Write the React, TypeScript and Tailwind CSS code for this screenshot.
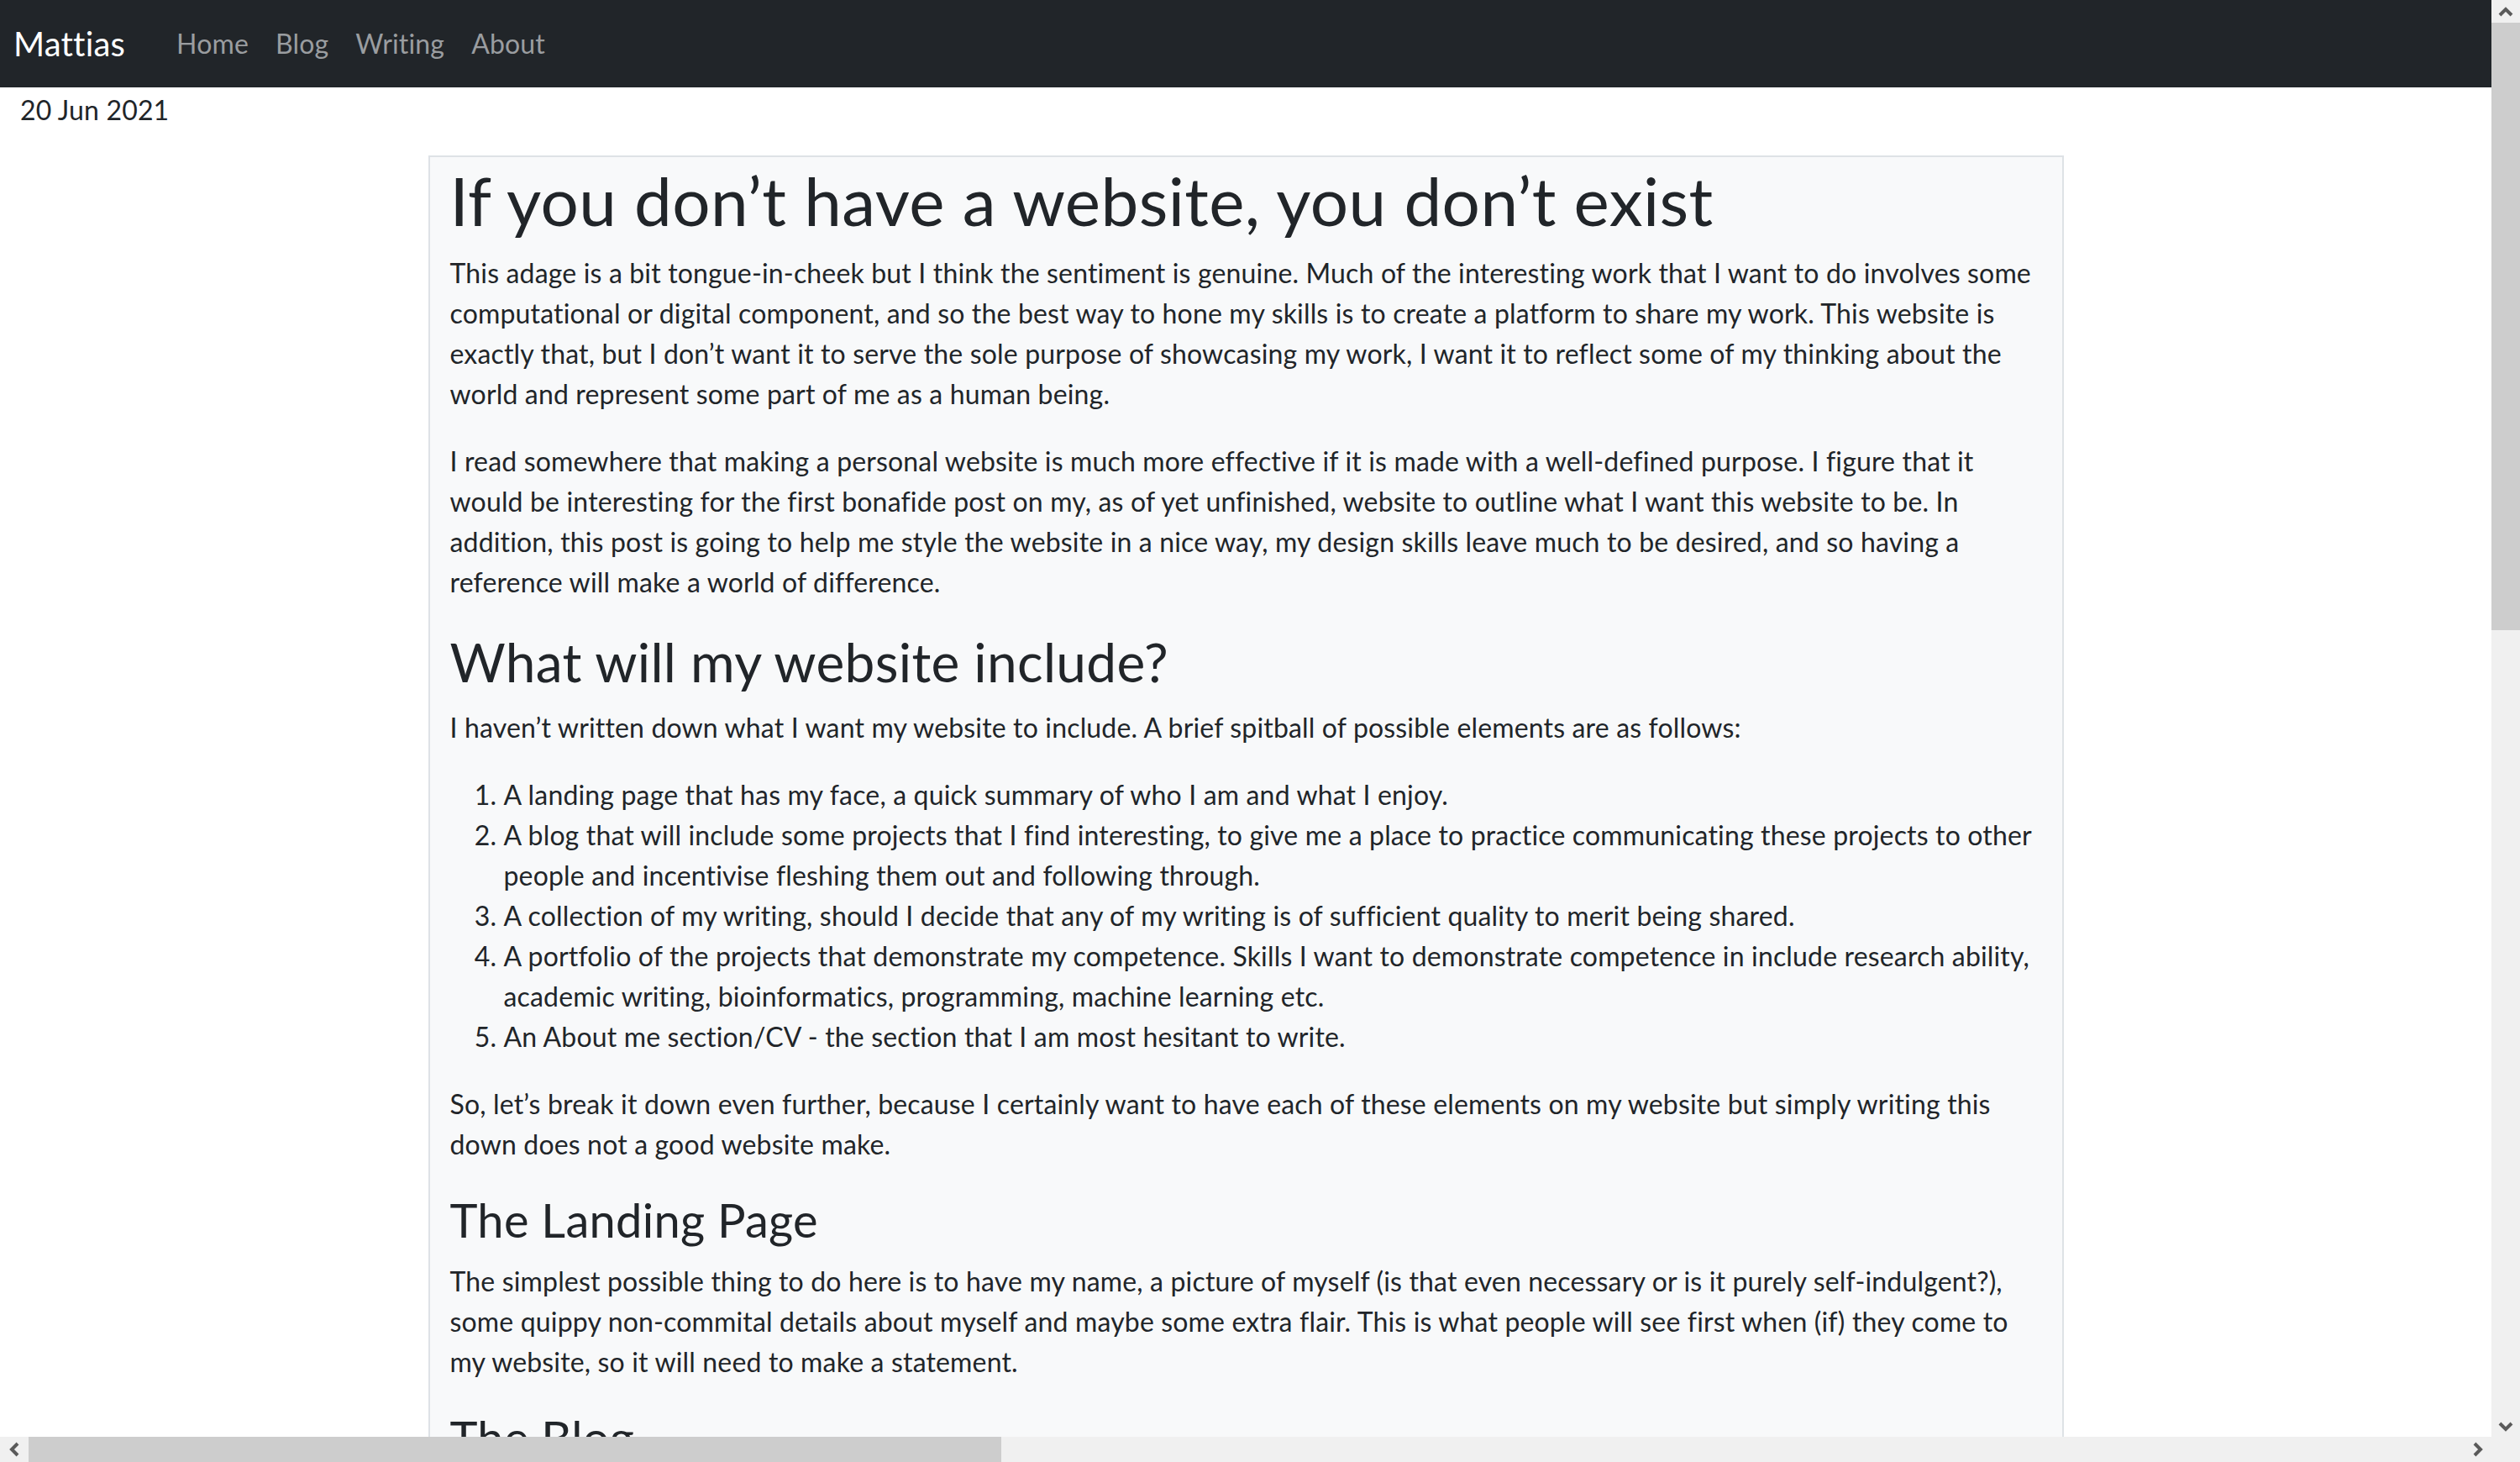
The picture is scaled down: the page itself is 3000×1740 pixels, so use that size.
import React from "react";

const navLinks = ["Home", "Blog", "Writing", "About"];

const listItems = [
  "A landing page that has my face, a quick summary of who I am and what I enjoy.",
  "A blog that will include some projects that I find interesting, to give me a place to practice communicating these projects to other people and incentivise fleshing them out and following through.",
  "A collection of my writing, should I decide that any of my writing is of sufficient quality to merit being shared.",
  "A portfolio of the projects that demonstrate my competence. Skills I want to demonstrate competence in include research ability, academic writing, bioinformatics, programming, machine learning etc.",
  "An About me section/CV - the section that I am most hesitant to write.",
];

function Chevron({ dir }: { dir: "up" | "down" | "left" | "right" }) {
  const paths = {
    up: "M2 12 L9 5 L16 12",
    down: "M2 5 L9 12 L16 5",
    left: "M12 2 L5 9 L12 16",
    right: "M5 2 L12 9 L5 16",
  };
  const box = dir === "up" || dir === "down" ? "0 0 18 16" : "0 0 16 18";
  const size = dir === "up" || dir === "down" ? "w-[18px] h-[16px]" : "w-[16px] h-[18px]";
  return (
    <svg className={size} viewBox={box} fill="none">
      <path d={paths[dir]} stroke="#5a5a5a" strokeWidth={4} strokeLinecap="butt" strokeLinejoin="miter" />
    </svg>
  );
}

function Navbar() {
  return (
    <nav className="h-[104px] shrink-0 bg-[#212529] flex items-center px-[16px]">
      <a className="text-[40px] leading-[60px] tracking-[0.005em] text-white mr-[61px]">Mattias</a>
      <ul className="flex items-center gap-[32px]">
        {navLinks.map((l) => (
          <li key={l} className="text-[32px] leading-[48px] tracking-[0.005em] text-[#9a9da0]">
            {l}
          </li>
        ))}
      </ul>
    </nav>
  );
}

function Post() {
  return (
    <article className="mx-auto w-[1947px] shrink-0 border-2 border-[#dee2e6] bg-[#f8f9fa] px-[24px] pt-[3px] text-[#212529]">
      <h1 className="text-[80px] leading-[96px] tracking-[0.005em] mb-[15px]">
        If you don’t have a website, you don’t exist
      </h1>
      <p className="mb-[32px]">
        This adage is a bit tongue-in-cheek but I think the sentiment is genuine. Much of the interesting work
        that I want to do involves some computational or digital component, and so the best way to hone my skills
        is to create a platform to share my work. This website is exactly that, but I don’t want it to serve the
        sole purpose of showcasing my work, I want it to reflect some of my thinking about the world and represent
        some part of me as a human being.
      </p>
      <p className="mb-[32px]">
        I read somewhere that making a personal website is much more effective if it is made with a well-defined
        purpose. I figure that it would be interesting for the first bonafide post on my, as of yet unfinished,
        website to outline what I want this website to be. In addition, this post is going to help me style the
        website in a nice way, my design skills leave much to be desired, and so having a reference will make a
        world of difference.
      </p>
      <h2 className="text-[64px] leading-[77px] tracking-[0.005em] mb-[16px]">What will my website include?</h2>
      <p className="mb-[32px]">
        I haven’t written down what I want my website to include. A brief spitball of possible elements are as
        follows:
      </p>
      <ol className="list-decimal pl-[64px] mb-[32px]">
        {listItems.map((item) => (
          <li key={item}>{item}</li>
        ))}
      </ol>
      <p className="mb-[32px]">
        So, let’s break it down even further, because I certainly want to have each of these elements on my
        website but simply writing this down does not a good website make.
      </p>
      <h3 className="text-[56px] leading-[67px] tracking-[0.005em] mb-[16px]">The Landing Page</h3>
      <p className="mb-[32px]">
        The simplest possible thing to do here is to have my name, a picture of myself (is that even necessary or
        is it purely self-indulgent?), some quippy non-commital details about myself and maybe some extra flair.
        This is what people will see first when (if) they come to my website, so it will need to make a statement.
      </p>
      <h3 className="text-[56px] leading-[67px] tracking-[0.005em] mb-[16px]">The Blog</h3>
      <p className="mb-[32px]">
        The blog is where I will put the projects that I find interesting and want to share with whoever happens
        to read them.
      </p>
    </article>
  );
}

export default function App() {
  return (
    <div className="h-screen w-screen flex flex-col overflow-hidden bg-white font-['Lato','Open_Sans',sans-serif] text-[32px] leading-[48px] tracking-[0.16px]">
      <div className="flex flex-1 min-h-0">
        <main className="flex-1 min-w-0 overflow-hidden flex flex-col">
          <Navbar />
          <div className="px-[24px] pt-[3px] mb-[30px] text-[#212529]">20 Jun 2021</div>
          <Post />
        </main>
        {/* vertical scrollbar */}
        <div className="w-[34px] shrink-0 bg-[#f0f0f0] flex flex-col">
          <div className="h-[27px] flex items-center justify-center">
            <Chevron dir="up" />
          </div>
          <div className="h-[723px] bg-[#cdcdcd]" />
          <div className="flex-1" />
          <div className="h-[27px] flex items-center justify-center">
            <Chevron dir="down" />
          </div>
        </div>
      </div>
      {/* horizontal scrollbar */}
      <div className="h-[30px] shrink-0 bg-[#f0f0f0] flex">
        <div className="w-[34px] flex items-center justify-center">
          <Chevron dir="left" />
        </div>
        <div className="w-[1158px] bg-[#cdcdcd]" />
        <div className="flex-1" />
        <div className="w-[34px] flex items-center justify-center">
          <Chevron dir="right" />
        </div>
        <div className="w-[34px]" />
      </div>
    </div>
  );
}
